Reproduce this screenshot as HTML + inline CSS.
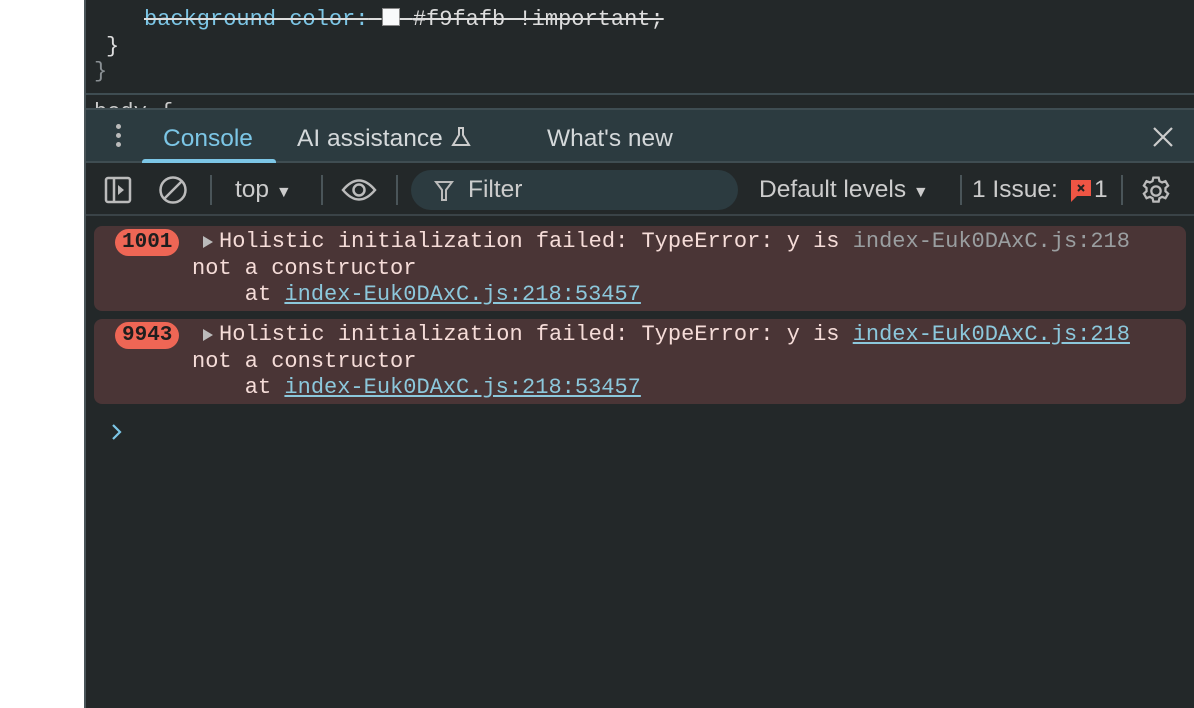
<!DOCTYPE html>
<html><head><style>
body{margin:0;width:1194px;height:708px;overflow:hidden;background:#fff;position:relative;font-family:"Liberation Sans",sans-serif}
.main{position:absolute;left:84px;top:0;width:1110px;height:708px;background:#232829;border-left:2px solid #4a5559;box-sizing:border-box}
.mono{font-family:"Liberation Mono",monospace;font-size:22px;white-space:pre;position:absolute}
.tabs{position:absolute;left:0;top:108px;width:100%;height:55px;background:#2c3b40;border-top:2px solid #3f4d52;border-bottom:2px solid #3f4d52;box-sizing:border-box}
.tb{position:absolute;top:163px;left:0;width:100%;height:53px;border-bottom:2px solid #3a4347;box-sizing:border-box}
.sep{position:absolute;top:12px;width:2px;height:30px;background:#4a5559}
.msg{position:absolute;left:8px;width:1092px;background:#4a3536;border-radius:8px}
.badge{position:absolute;background:#ee6655;color:#1e1e1e;border-radius:14px;font-family:"Liberation Mono",monospace;font-weight:bold;font-size:21px;height:27px;line-height:28px;padding:0 7px}
.t{color:#f5dcd8}
.lk{color:#8cc8dc;text-decoration:underline}
.s{position:absolute;font-size:24.5px}
</style></head><body>
<div class="main">
<div class="mono" style="left:58px;top:7px;color:#7cc6e6;text-decoration:line-through;text-decoration-color:#ddd">background-color:<span style="color:#ddd"> </span><span style="display:inline-block;width:16px;height:16px;background:#f9fafb;border:1px solid #888;vertical-align:-1px"></span> <span style="color:#ddd">#f9fafb !important;</span></div>
<div class="mono" style="left:20px;top:34px;color:#ddd">}</div>
<div class="mono" style="left:8px;top:59px;color:#8a9094">}</div>
<div style="position:absolute;left:0;top:93px;width:100%;height:2px;background:#3f4d52"></div>
<div class="mono" style="left:8px;top:100px;color:#ccc;height:8px;overflow:hidden">body {</div>
<div class="tabs">
 <div style="position:absolute;left:30px;top:14px;width:4px">
  <div style="width:5px;height:5px;border-radius:50%;background:#bbb;margin-bottom:4px"></div>
  <div style="width:5px;height:5px;border-radius:50%;background:#bbb;margin-bottom:4px"></div>
  <div style="width:5px;height:5px;border-radius:50%;background:#bbb"></div></div>
 <div class="s" style="left:77px;top:15px;color:#7cc6e6">Console</div>
 <div style="position:absolute;left:56px;top:49px;width:134px;height:4px;background:#7cc6e6;border-radius:3px 3px 0 0"></div>
 <div class="s" style="left:211px;top:15px;color:#d4d8da">AI assistance <svg width="22" height="22" viewBox="0 0 22 22" style="vertical-align:-2px"><path d="M8 2h6M9 2v7L3 19h16L13 9V2" fill="none" stroke="#ccc" stroke-width="2"/></svg></div>
 <div class="s" style="left:461px;top:15px;color:#d4d8da">What's new</div>
 <svg style="position:absolute;left:1066px;top:16px" width="22" height="22"><path d="M2 2L20 20M20 2L2 20" stroke="#ccc" stroke-width="2.2"/></svg>
</div>
<div class="tb">
 <svg style="position:absolute;left:18px;top:13px" width="28" height="28"><rect x="2" y="2" width="24" height="24" rx="2" fill="none" stroke="#bbb" stroke-width="2.5"/><path d="M10 2v24" stroke="#bbb" stroke-width="2.5"/><path d="M14 9l6 5-6 5z" fill="#bbb"/></svg>
 <svg style="position:absolute;left:72px;top:12px" width="30" height="30"><circle cx="15" cy="15" r="12.5" fill="none" stroke="#bbb" stroke-width="2.5"/><path d="M6 24L24 6" stroke="#bbb" stroke-width="2.5"/></svg>
 <div class="sep" style="left:124px"></div>
 <div class="s" style="left:149px;top:13px;color:#ccc">top <span style="font-size:16px">▼</span></div>
 <div class="sep" style="left:235px"></div>
 <svg style="position:absolute;left:255px;top:14px" width="36" height="26"><path d="M2 13Q18 -6 34 13Q18 32 2 13z" fill="none" stroke="#bbb" stroke-width="2.5"/><circle cx="18" cy="13" r="5.5" fill="none" stroke="#bbb" stroke-width="2.5"/></svg>
 <div class="sep" style="left:310px"></div>
 <div style="position:absolute;left:325px;top:7px;width:327px;height:40px;border-radius:20px;background:#2c3b40"></div>
 <svg style="position:absolute;left:348px;top:17px" width="20" height="22"><path d="M2 2h16l-6 8v10h-4V10z" fill="none" stroke="#bbb" stroke-width="2"/></svg>
 <div class="s" style="left:382px;top:13px;color:#ccc">Filter</div>
 <div class="s" style="left:673px;top:13px;color:#ccc">Default levels <span style="font-size:16px">▼</span></div>
 <div class="sep" style="left:874px"></div>
 <div class="s" style="left:886px;top:13px;color:#ccc">1 Issue:</div>
 <svg style="position:absolute;left:984px;top:16px" width="22" height="24"><path d="M1 1h20v16H7l-6 6z" fill="#ee5544"/><path d="M8 6l6 6M14 6l-6 6" stroke="#222" stroke-width="2"/></svg>
 <div class="s" style="left:1008px;top:13px;color:#ccc">1</div>
 <div class="sep" style="left:1035px"></div>
 <svg style="position:absolute;left:1054px;top:12px" width="32" height="32" viewBox="0 0 24 24"><path d="M12 8.5a3.5 3.5 0 1 0 0 7a3.5 3.5 0 1 0 0-7zM10 2h4l.6 2.6 2 1 2.5-1 2 3.4-2 1.8v2.4l2 1.8-2 3.4-2.5-1-2 1-.6 2.6h-4l-.6-2.6-2-1-2.5 1-2-3.4 2-1.8v-2.4l-2-1.8 2-3.4 2.5 1 2-1z" fill="none" stroke="#bbb" stroke-width="1.7"/></svg>
</div>
<div class="msg" style="top:226px;height:85px"></div>
<div class="msg" style="top:319px;height:85px"></div>
<div class="badge" style="left:29px;top:229px">1001</div>
<div class="badge" style="left:29px;top:322px">9943</div>
<svg style="position:absolute;left:116px;top:235px" width="12" height="14"><path d="M1 1l10 6-10 6z" fill="#bbb"/></svg>
<svg style="position:absolute;left:116px;top:328px" width="12" height="14"><path d="M1 1l10 6-10 6z" fill="#bbb"/></svg>
<div class="mono t" style="left:133px;top:229px">Holistic initialization failed: TypeError: y is <span style="color:#9a9ea0">index-Euk0DAxC.js:218</span></div>
<div class="mono t" style="left:106px;top:256px">not a constructor</div>
<div class="mono t" style="left:106px;top:282px">    at <span class="lk">index-Euk0DAxC.js:218:53457</span></div>
<div class="mono t" style="left:133px;top:322px">Holistic initialization failed: TypeError: y is <span class="lk">index-Euk0DAxC.js:218</span></div>
<div class="mono t" style="left:106px;top:349px">not a constructor</div>
<div class="mono t" style="left:106px;top:375px">    at <span class="lk">index-Euk0DAxC.js:218:53457</span></div>
<svg style="position:absolute;left:24px;top:423px" width="14" height="18"><path d="M3 2l7 7-7 7" fill="none" stroke="#7cc6e6" stroke-width="2.2"/></svg>
</div>
</body></html>
